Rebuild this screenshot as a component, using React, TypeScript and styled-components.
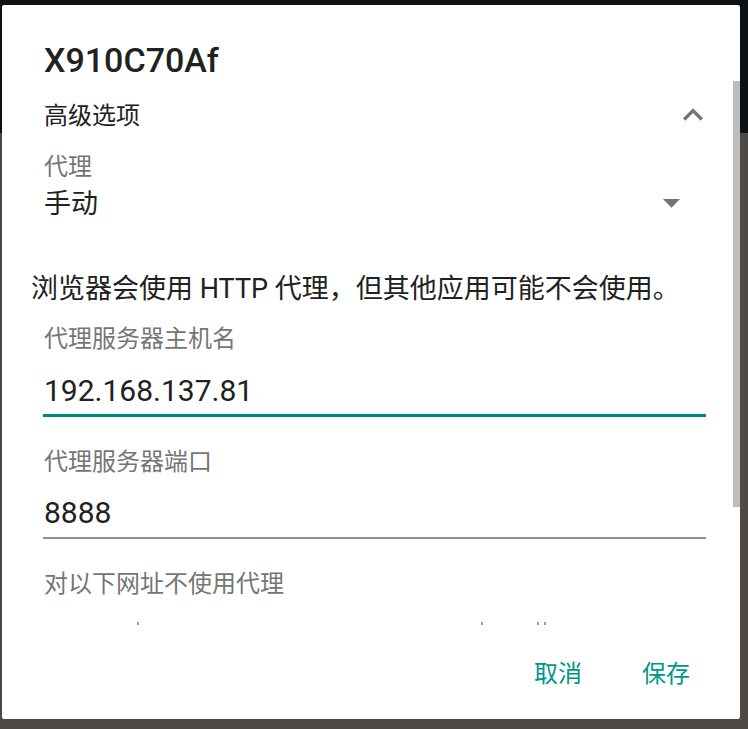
import React from 'react';
import styled, { createGlobalStyle } from 'styled-components';

const FONT = `Roboto, "Noto Sans CJK SC", sans-serif`;

const GlobalStyle = createGlobalStyle`
  html, body { margin: 0; padding: 0; }
  body { background: #4d4946; font-family: ${FONT}; }
  * { box-sizing: border-box; }
`;

const Screen = styled.div`
  width: 748px;
  height: 729px;
  background: linear-gradient(to bottom, #0f1214 0, #0f1214 133px, #4d4946 133px);
  padding: 5px 8px 10px 2px;
  display: flex;
`;

const Dialog = styled.div`
  flex: 1;
  background: #ffffff;
  border-radius: 2px;
  display: flex;
  flex-direction: column;
  overflow: hidden;
`;

const Title = styled.h1`
  margin: 0;
  padding: 35px 0 0 42px;
  font-family: ${FONT};
  font-weight: 500;
  font-size: 34px;
  line-height: 40px;
  color: #212121;
`;

const Viewport = styled.div`
  position: relative;
  height: 546px;
  overflow: hidden;
`;

const ScrollThumb = styled.div`
  position: absolute;
  top: 1px;
  right: 0;
  width: 7px;
  height: 426px;
  background: #bdbdbd;
`;

const Content = styled.div`
  padding: 0 34px 0 42px;
  display: flex;
  flex-direction: column;
`;

const AdvancedRow = styled.div`
  margin-top: 12px;
  height: 48px;
  display: flex;
  align-items: center;
  justify-content: space-between;
  font-size: 24px;
  line-height: 48px;
  color: #212121;
`;

const ChevronIcon = styled.svg`
  width: 40px;
  height: 40px;
  margin-right: -7px;
  margin-bottom: 2px;
  fill: #757575;
`;

const Label = styled.div<{ $gap: number }>`
  margin-top: ${(p) => p.$gap}px;
  font-size: 24px;
  line-height: 30px;
  color: #757575;
`;

const SpinnerRow = styled.div`
  margin-top: 4px;
  height: 36px;
  display: flex;
  align-items: center;
  justify-content: space-between;
  font-size: 27px;
  line-height: 36px;
  color: #212121;
`;

const DropIcon = styled.svg`
  width: 41px;
  height: 41px;
  margin-right: 14px;
  margin-bottom: 4px;
  fill: #757575;
`;

const Message = styled.p`
  margin: 49px 0 0 -13px;
  font-size: 27px;
  line-height: 36px;
  color: #212121;
  white-space: nowrap;
`;

const InputValue = styled.div<{ $gap: number }>`
  margin-top: ${(p) => p.$gap}px;
  font-size: 30px;
  line-height: 36px;
  color: #212121;
`;

const Underline = styled.div<{ $focused?: boolean }>`
  margin-top: ${(p) => (p.$focused ? 5 : 6)}px;
  height: ${(p) => (p.$focused ? 3 : 2)}px;
  margin-left: -1px;
  background: ${(p) => (p.$focused ? '#00897b' : '#8f8f8f')};
`;

const ClippedHint = styled.div`
  margin-top: 23px;
  height: 3px;
  display: flex;
`;

const HintDot = styled.span<{ $ml: number }>`
  margin-left: ${(p) => p.$ml}px;
  width: 2px;
  height: 3px;
  background: #9e9e9e;
`;

const ButtonBar = styled.div`
  display: flex;
  justify-content: flex-end;
  gap: 36px;
  padding: 30px 38px 0 0;
`;

const TextButton = styled.button`
  background: none;
  border: 0;
  padding: 0 12px;
  font-family: ${FONT};
  font-size: 24px;
  line-height: 36px;
  color: #009688;
  cursor: pointer;
`;

export default function App() {
  return (
    <>
      <GlobalStyle />
      <Screen>
        <Dialog>
          <Title>X910C70Af</Title>
          <Viewport>
            <Content>
              <AdvancedRow>
                <span>高级选项</span>
                <ChevronIcon viewBox="0 0 24 24">
                  <path d="M12 8l-6 6 1.41 1.41L12 10.83l4.59 4.58L18 14z" />
                </ChevronIcon>
              </AdvancedRow>
              <Label $gap={12}>代理</Label>
              <SpinnerRow>
                <span>手动</span>
                <DropIcon viewBox="0 0 24 24">
                  <path d="M7 10l5 5 5-5z" />
                </DropIcon>
              </SpinnerRow>
              <Message>浏览器会使用 HTTP 代理，但其他应用可能不会使用。</Message>
              <Label $gap={17}>代理服务器主机名</Label>
              <InputValue $gap={19}>192.168.137.81</InputValue>
              <Underline $focused />
              <Label $gap={30}>代理服务器端口</Label>
              <InputValue $gap={18}>8888</InputValue>
              <Underline />
              <Label $gap={30}>对以下网址不使用代理</Label>
              <ClippedHint>
                <HintDot $ml={93} />
                <HintDot $ml={342} />
                <HintDot $ml={54} />
                <HintDot $ml={5} />
              </ClippedHint>
            </Content>
            <ScrollThumb />
          </Viewport>
          <ButtonBar>
            <TextButton>取消</TextButton>
            <TextButton>保存</TextButton>
          </ButtonBar>
        </Dialog>
      </Screen>
    </>
  );
}
